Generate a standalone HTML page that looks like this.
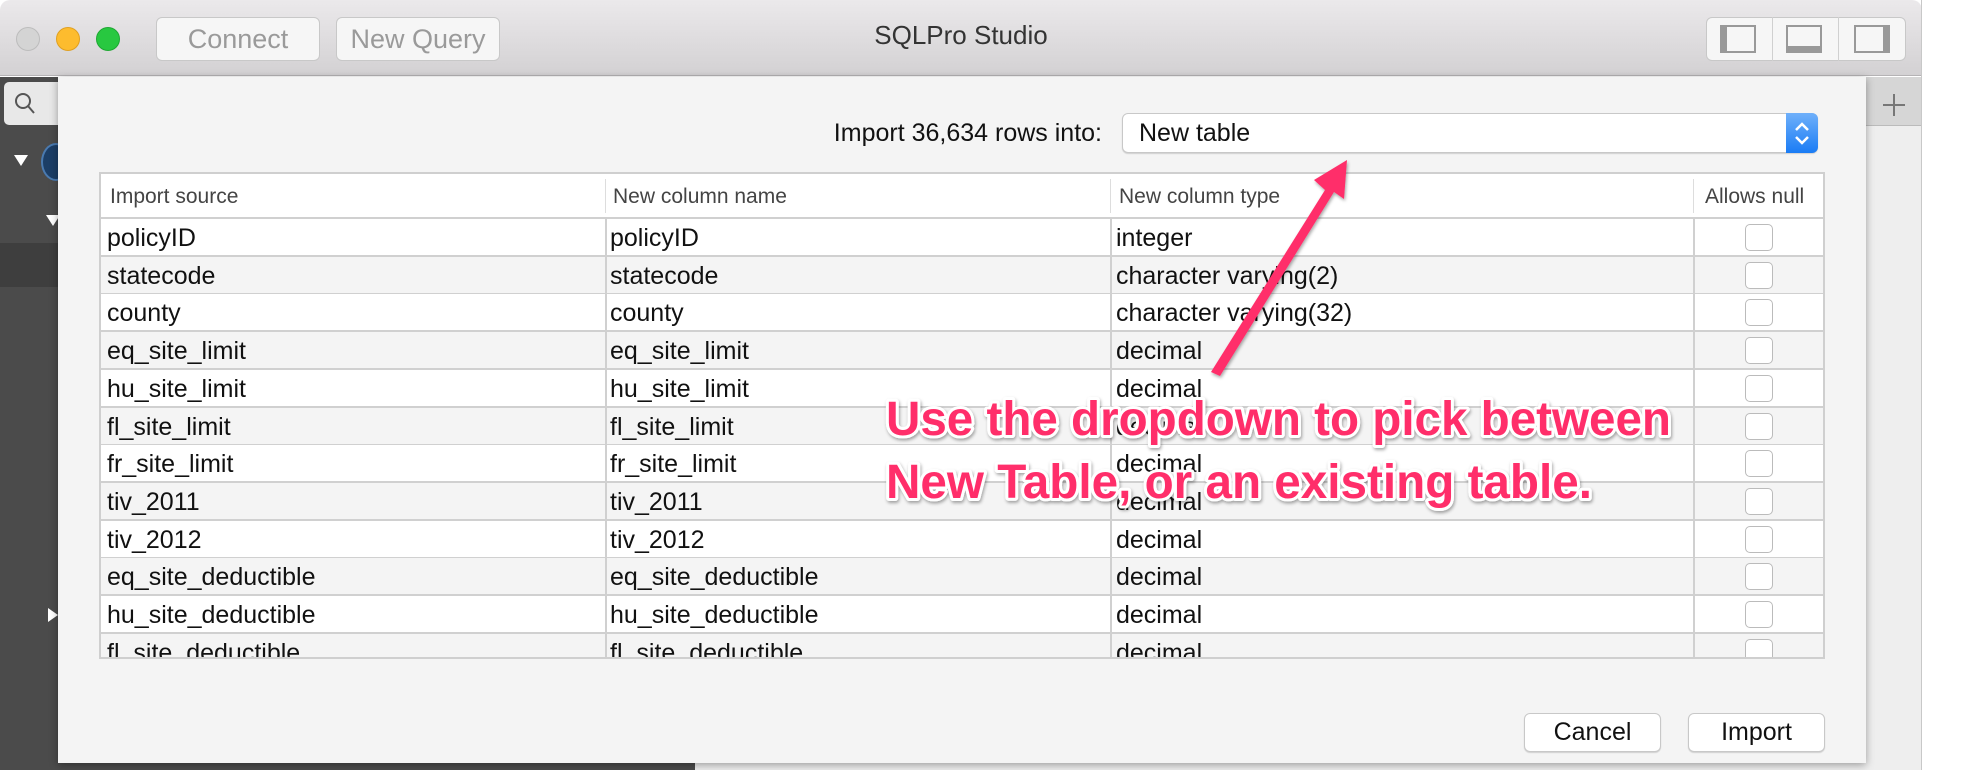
<!DOCTYPE html>
<html><head><meta charset="utf-8"><style>
*{box-sizing:border-box;margin:0;padding:0}
body{width:1964px;height:770px;background:#fff;position:relative;overflow:hidden;font-family:"Liberation Sans",sans-serif}
.abs{position:absolute}
.tb{left:0;top:0;width:1922px;height:76px;background:linear-gradient(#ebe9eb,#d3d1d3);border-radius:10px 10px 0 0;border-bottom:1px solid #b5b3b5}
.dot{width:24px;height:24px;border-radius:50%;top:27px}
.btn{background:#f6f6f6;border:1px solid #c8c8c8;border-radius:6px;color:#9a9a9a;font-size:27px;text-align:center;line-height:42px}
.row{position:absolute;left:0;width:100%;height:38px;border-bottom:2px solid #d0d0d0;font-size:25px;color:#111}
.row span{position:absolute;top:5px}
.cb{position:absolute;left:50px;top:5px;width:28px;height:27px;border:1px solid #bbb;border-radius:5px;background:#fff}
</style></head><body>
<div class="abs tb"></div>
<div class="abs dot" style="left:16px;background:#d4d4d4;border:1px solid #bcbcbc"></div>
<div class="abs dot" style="left:56px;background:#fdbc2e;border:1px solid #e0a020"></div>
<div class="abs dot" style="left:96px;background:#28c840;border:1px solid #1ea832"></div>
<div class="abs btn" style="left:156px;top:17px;width:164px;height:44px">Connect</div>
<div class="abs btn" style="left:336px;top:17px;width:164px;height:44px">New Query</div>
<div class="abs" style="left:0;width:1922px;top:20px;text-align:center;font-size:26px;color:#333">SQLPro Studio</div>
<div class="abs" style="left:1706px;top:17px;width:200px;height:44px;background:#f6f6f6;border:1px solid #c8c8c8;border-radius:6px"></div>
<div class="abs" style="left:1772px;top:17px;width:1px;height:44px;background:#d0d0d0"></div>
<div class="abs" style="left:1838px;top:17px;width:1px;height:44px;background:#d0d0d0"></div>
<div class="abs" style="left:1720px;top:25px;width:36px;height:28px;border:2px solid #999;border-left:7px solid #999"></div>
<div class="abs" style="left:1786px;top:25px;width:36px;height:28px;border:2px solid #999;border-bottom:7px solid #999"></div>
<div class="abs" style="left:1854px;top:25px;width:36px;height:28px;border:2px solid #999;border-right:7px solid #999"></div>
<!-- sidebar -->
<div class="abs" style="left:0;top:77px;width:695px;height:693px;background:#4b4b4b"></div>
<div class="abs" style="left:4px;top:82px;width:60px;height:43px;background:#e8e8e8;border-radius:5px"></div>
<svg class="abs" style="left:14px;top:92px" width="22" height="24"><circle cx="9" cy="9" r="7" fill="none" stroke="#555" stroke-width="2"/><path d="M14 14 L20 21" stroke="#555" stroke-width="2"/></svg>
<div class="abs" style="left:0;top:243px;width:58px;height:44px;background:#3e3e3e"></div>
<div class="abs" style="left:14px;top:155px;width:0;height:0;border-left:7px solid transparent;border-right:7px solid transparent;border-top:11px solid #fff"></div>
<div class="abs" style="left:46px;top:215px;width:0;height:0;border-left:7px solid transparent;border-right:7px solid transparent;border-top:11px solid #fff"></div>
<div class="abs" style="left:48px;top:608px;width:0;height:0;border-top:7px solid transparent;border-bottom:7px solid transparent;border-left:10px solid #fff"></div>
<div class="abs" style="left:41px;top:143px;width:30px;height:38px;border-radius:50%;background:#1c3e66;border:2px solid #4a7ab0"></div>
<div class="abs" style="left:695px;top:77px;width:1227px;height:693px;background:#eeeeee"></div>
<div class="abs" style="left:1866px;top:77px;width:56px;height:49px;background:#d6d6d6;border-bottom:1px solid #bbb"></div>
<div class="abs" style="left:1883px;top:104px;width:22px;height:2px;background:#777"></div>
<div class="abs" style="left:1893px;top:94px;width:2px;height:22px;background:#777"></div>
<div class="abs" style="left:1921px;top:0;width:1px;height:770px;background:#c8c8c8"></div>
<!-- dialog -->
<div class="abs" style="left:58px;top:77px;width:1808px;height:686px;background:#f4f4f4;box-shadow:0 2px 8px rgba(0,0,0,.35)"></div>
<div class="abs" style="left:700px;top:119px;width:402px;text-align:right;font-size:25px;color:#111">Import 36,634 rows into:</div>
<div class="abs" style="left:1122px;top:113px;width:696px;height:40px;background:#fff;border:1px solid #c8c8c8;border-radius:6px;box-shadow:0 1px 1px rgba(0,0,0,.15);font-size:25px;color:#111;padding:5px 0 0 16px">New table</div>
<div class="abs" style="left:1786px;top:113px;width:32px;height:40px;background:linear-gradient(#6fb0fa,#1a7cf5);border-radius:0 6px 6px 0">
<svg width="32" height="40"><path d="M10 17 L16 11 L22 17 M10 24 L16 30 L22 24" fill="none" stroke="#fff" stroke-width="2.5"/></svg></div>
<!-- table -->
<div class="abs" style="left:99px;top:172px;width:1726px;height:487px;background:#fff;border:2px solid #cfcfcf;overflow:hidden">
<div class="abs" style="left:0;top:0;width:100%;height:45px;border-bottom:2px solid #d0d0d0;font-size:21px;color:#444">
<span class="abs" style="left:9px;top:11px">Import source</span>
<span class="abs" style="left:512px;top:11px">New column name</span>
<span class="abs" style="left:1018px;top:11px">New column type</span>
<span class="abs" style="left:1604px;top:11px">Allows null</span>
<div class="abs" style="left:504px;top:5px;width:1px;height:34px;background:#ddd"></div>
<div class="abs" style="left:1009px;top:5px;width:1px;height:34px;background:#ddd"></div>
<div class="abs" style="left:1592px;top:5px;width:1px;height:34px;background:#ddd"></div>
</div>
<div class="abs" style="left:0;top:45px;width:100%;height:460px">
<div class="row" style="top:0;background:#fff"><span style="left:6px">policyID</span><span style="left:509px">policyID</span><span style="left:1015px">integer</span><div class="cb" style="left:1644px"></div></div>
<div class="row" style="top:37.7px;background:#f4f4f4"><span style="left:6px">statecode</span><span style="left:509px">statecode</span><span style="left:1015px">character varying(2)</span><div class="cb" style="left:1644px"></div></div>
<div class="row" style="top:75.4px;background:#fff"><span style="left:6px">county</span><span style="left:509px">county</span><span style="left:1015px">character varying(32)</span><div class="cb" style="left:1644px"></div></div>
<div class="row" style="top:113.1px;background:#f4f4f4"><span style="left:6px">eq_site_limit</span><span style="left:509px">eq_site_limit</span><span style="left:1015px">decimal</span><div class="cb" style="left:1644px"></div></div>
<div class="row" style="top:150.8px;background:#fff"><span style="left:6px">hu_site_limit</span><span style="left:509px">hu_site_limit</span><span style="left:1015px">decimal</span><div class="cb" style="left:1644px"></div></div>
<div class="row" style="top:188.5px;background:#f4f4f4"><span style="left:6px">fl_site_limit</span><span style="left:509px">fl_site_limit</span><span style="left:1015px">decimal</span><div class="cb" style="left:1644px"></div></div>
<div class="row" style="top:226.2px;background:#fff"><span style="left:6px">fr_site_limit</span><span style="left:509px">fr_site_limit</span><span style="left:1015px">decimal</span><div class="cb" style="left:1644px"></div></div>
<div class="row" style="top:263.9px;background:#f4f4f4"><span style="left:6px">tiv_2011</span><span style="left:509px">tiv_2011</span><span style="left:1015px">decimal</span><div class="cb" style="left:1644px"></div></div>
<div class="row" style="top:301.6px;background:#fff"><span style="left:6px">tiv_2012</span><span style="left:509px">tiv_2012</span><span style="left:1015px">decimal</span><div class="cb" style="left:1644px"></div></div>
<div class="row" style="top:339.3px;background:#f4f4f4"><span style="left:6px">eq_site_deductible</span><span style="left:509px">eq_site_deductible</span><span style="left:1015px">decimal</span><div class="cb" style="left:1644px"></div></div>
<div class="row" style="top:377px;background:#fff"><span style="left:6px">hu_site_deductible</span><span style="left:509px">hu_site_deductible</span><span style="left:1015px">decimal</span><div class="cb" style="left:1644px"></div></div>
<div class="row" style="top:414.7px;background:#f4f4f4"><span style="left:6px">fl_site_deductible</span><span style="left:509px">fl_site_deductible</span><span style="left:1015px">decimal</span><div class="cb" style="left:1644px"></div></div>
</div>
<div class="abs" style="left:504px;top:45px;width:2px;height:450px;background:#d0d0d0"></div>
<div class="abs" style="left:1009px;top:45px;width:2px;height:450px;background:#d0d0d0"></div>
<div class="abs" style="left:1592px;top:45px;width:2px;height:450px;background:#d0d0d0"></div>
</div>
<div class="abs" style="left:1524px;top:713px;width:137px;height:39px;background:#fff;border:1px solid #c8c8c8;border-radius:6px;box-shadow:0 1px 1px rgba(0,0,0,.15);font-size:25px;text-align:center;line-height:37px;color:#111">Cancel</div>
<div class="abs" style="left:1688px;top:713px;width:137px;height:39px;background:#fff;border:1px solid #c8c8c8;border-radius:6px;box-shadow:0 1px 1px rgba(0,0,0,.15);font-size:25px;text-align:center;line-height:37px;color:#111">Import</div>
<!-- annotation -->
<svg class="abs" style="left:0;top:0" width="1964" height="770">
<defs><filter id="s"><feDropShadow dx="1" dy="2" stdDeviation="1.5" flood-color="#000" flood-opacity=".35"/></filter></defs>
<g filter="url(#s)">
<path d="M1211 372 L1325 190 L1314 180 L1347 160 L1344 199 L1334 192 L1220 376 Z" fill="#ff2f6a"/>
<g font-family="Liberation Sans,sans-serif" font-weight="bold" font-size="48" fill="#ff2f6a" stroke="#fff" stroke-width="6" paint-order="stroke" stroke-linejoin="round">
<text x="886" y="435" textLength="785" lengthAdjust="spacingAndGlyphs">Use the dropdown to pick between</text>
<text x="886" y="498" textLength="706" lengthAdjust="spacingAndGlyphs">New Table, or an existing table.</text>
</g></g>
</svg>
</body></html>
